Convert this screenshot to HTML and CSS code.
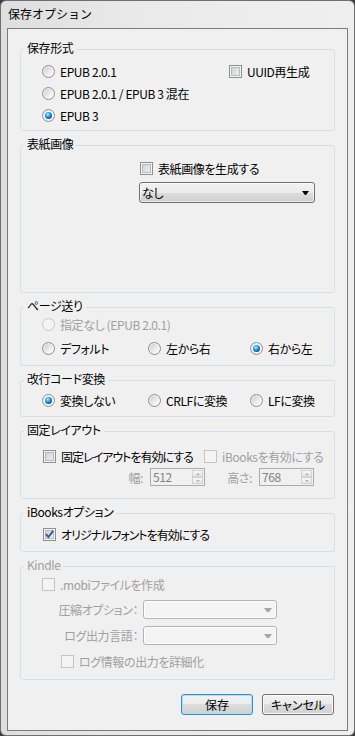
FILE: index.html
```html
<!DOCTYPE html>
<html lang="ja">
<head>
    <meta charset="UTF-8">
    <meta name="viewport" content="width=device-width, initial-scale=1.0">
    <title>保存オプション</title>
    <link rel="stylesheet" href="styles.css">
</head>
<body>

    <div class="window">
        <div class="titlebar">保存オプション</div>

        <div class="client">

            <!-- 保存形式 -->
            <div class="group">
                <div class="group-title">保存形式</div>
                <div class="format-body">
                    <div class="format-list">
                        <label class="opt"><span class="radio"></span>EPUB 2.0.1</label>
                        <label class="opt"><span class="radio"></span>EPUB 2.0.1 / EPUB 3 混在</label>
                        <label class="opt"><span class="radio on"></span>EPUB 3</label>
                    </div>
                    <label class="opt"><span class="check"></span>UUID再生成</label>
                </div>
            </div>

            <!-- 表紙画像 -->
            <div class="group">
                <div class="group-title">表紙画像</div>
                <div class="cover-body">
                    <label class="opt cover-check"><span class="check"></span>表紙画像を生成する</label>
                    <div class="combo">なし<span class="arrow"></span></div>
                </div>
            </div>

            <!-- ページ送り -->
            <div class="group">
                <div class="group-title">ページ送り</div>
                <div class="page-body">
                    <label class="opt dis"><span class="radio off"></span>指定なし (EPUB 2.0.1)</label>
                    <div class="radio-grid page-second">
                        <label class="opt"><span class="radio"></span>デフォルト</label>
                        <label class="opt"><span class="radio"></span>左から右</label>
                        <label class="opt"><span class="radio on"></span>右から左</label>
                    </div>
                </div>
            </div>

            <!-- 改行コード変換 -->
            <div class="group">
                <div class="group-title">改行コード変換</div>
                <div class="radio-grid newline-body">
                    <label class="opt"><span class="radio on"></span>変換しない</label>
                    <label class="opt"><span class="radio"></span>CRLFに変換</label>
                    <label class="opt"><span class="radio"></span>LFに変換</label>
                </div>
            </div>

            <!-- 固定レイアウト -->
            <div class="group">
                <div class="group-title">固定レイアウト</div>
                <div class="fixed-body">
                    <div class="fixed-row">
                        <label class="opt tight"><span class="check"></span>固定レイアウトを有効にする</label>
                        <label class="opt dis"><span class="check off"></span>iBooksを有効にする</label>
                    </div>
                    <div class="size-row">
                        <span class="size-label">幅:</span>
                        <div class="spin">
                            <span class="spin-val">512</span>
                            <span class="spin-btns"><span class="spin-btn up"></span><span class="spin-btn down"></span></span>
                        </div>
                        <span class="size-label">高さ:</span>
                        <div class="spin">
                            <span class="spin-val">768</span>
                            <span class="spin-btns"><span class="spin-btn up"></span><span class="spin-btn down"></span></span>
                        </div>
                    </div>
                </div>
            </div>

            <!-- iBooksオプション -->
            <div class="group">
                <div class="group-title">iBooksオプション</div>
                <div class="ibooks-body">
                    <label class="opt tight">
                        <span class="check">
                            <svg width="11" height="11" viewBox="0 0 11 11"><path d="M2 5.2 L4.4 8 L9.2 1.8" fill="none" stroke="#3d5a98" stroke-width="2"/></svg>
                        </span>オリジナルフォントを有効にする
                    </label>
                </div>
            </div>

            <!-- Kindle -->
            <div class="group">
                <div class="group-title dis">Kindle</div>
                <div class="kindle-body">
                    <label class="opt dis mobi-row"><span class="check off"></span>.mobiファイルを作成</label>
                    <div class="combo-row first">
                        <span class="combo-label">圧縮オプション：</span>
                        <div class="combo off"><span class="arrow"></span></div>
                    </div>
                    <div class="combo-row">
                        <span class="combo-label">ログ出力言語：</span>
                        <div class="combo off"><span class="arrow"></span></div>
                    </div>
                    <label class="opt dis log-row"><span class="check off"></span>ログ情報の出力を詳細化</label>
                </div>
            </div>

            <div class="buttons">
                <button class="btn default">保存</button>
                <button class="btn">キャンセル</button>
            </div>

        </div>
    </div>

</body>
</html>
```

FILE: styles.css
```css
html {
    background: #3c3c3c;
}

body {
    margin: 0;
    font-family: "Noto Sans CJK JP", "Noto Sans", sans-serif;
    font-size: 12px;
    color: #000;
}

.window {
    box-sizing: border-box;
    width: 355px;
    height: 736px;
    border: 1px solid #6f6f6f;
    border-radius: 6px;
    background: linear-gradient(to right, #dedede, #eaeaea 40%, #efefef);
    padding: 0 6px 4px;
    display: flex;
    flex-direction: column;
}

.titlebar {
    height: 27px;
    line-height: 26px;
    margin: 0 -6px;
    padding-left: 7px;
}

.client {
    flex: 1;
    border: 1px solid #7b7b7b;
    background: #f0f0f0;
    padding: 20px 12px 0;
    display: flex;
    flex-direction: column;
    font-feature-settings: "palt";
    letter-spacing: -0.4px;
}

/* group boxes */
.group {
    border: 1px solid #d5dfe5;
    border-radius: 3px;
    margin-bottom: 14px;
}

.group-title {
    width: fit-content;
    margin: -9px 0 0 3px;
    padding: 0 3px;
    line-height: 14px;
    background: #f0f0f0;
}

.dis {
    color: #a0a0a0;
}

.opt {
    display: flex;
    align-items: center;
    height: 22px;
    white-space: nowrap;
}

.tight {
    letter-spacing: -1px;
}

/* radio buttons and check boxes */
.radio {
    box-sizing: border-box;
    width: 13px;
    height: 13px;
    border-radius: 50%;
    border: 1px solid #8e8f8f;
    background: linear-gradient(135deg, #c8c8c8, #f8f8f8 75%);
    box-shadow: inset 0 0 0 1px #f2f2f2;
    display: inline-flex;
    align-items: center;
    justify-content: center;
    margin-right: 5px;
    flex: none;
}

.radio.on {
    background: #f4f4f4;
}

.radio.on::after {
    content: "";
    width: 7px;
    height: 7px;
    border-radius: 50%;
    background: radial-gradient(circle at 40% 35%, #b4f4ff 0, #2aa6e8 35%, #0e58a0 70%, #0b3a75 100%);
}

.radio.off {
    border-color: #c6c6c6;
    background: #f4f4f4;
    box-shadow: none;
}

.check {
    box-sizing: border-box;
    width: 13px;
    height: 13px;
    border: 1px solid #8e8f8f;
    background: linear-gradient(135deg, #c6cad0, #f6f6f6);
    box-shadow: inset 0 0 0 1px #f4f4f4, inset 0 0 0 2px #b7bbc0;
    display: inline-flex;
    margin-right: 5px;
    flex: none;
}

.check.off {
    border-color: #c5c5c5;
    background: #f4f4f4;
    box-shadow: none;
}

/* combo boxes */
.combo {
    box-sizing: border-box;
    width: 176px;
    height: 21px;
    border: 1px solid #707070;
    border-radius: 3px;
    background: linear-gradient(#f2f2f2, #ebebeb 50%, #dddddd 50%, #cfcfcf);
    box-shadow: inset 0 0 0 1px rgba(255, 255, 255, 0.6);
    display: flex;
    align-items: center;
    padding: 0 5px 0 2px;
}

.combo .arrow {
    margin-left: auto;
    width: 1px;
    height: 0;
    border-left: 3px solid transparent;
    border-right: 3px solid transparent;
    border-top: 4px solid #000;
}

.combo.off {
    width: 134px;
    height: 19px;
    border-color: #b0b4b7;
    background: #f4f4f4;
    box-shadow: inset 0 0 0 1px #fff;
    padding-right: 4px;
}

.combo.off .arrow {
    width: 2px;
    border-top-color: #a6a6a6;
}

/* 保存形式 */
.format-body {
    display: flex;
    padding: 5px 0 4px 21px;
}

.format-list {
    width: 187px;
}

/* 表紙画像 */
.cover-body {
    padding: 6px 0 89px 118px;
}

.cover-check {
    margin-left: 1px;
}

.cover-body .combo {
    margin-top: 3px;
}

/* ページ送り / 改行コード変換 */
.radio-grid {
    display: grid;
    grid-template-columns: 106px 102px auto;
}

.page-body {
    padding: 0 0 6px 21px;
}

.page-second {
    margin-top: 2px;
}

.newline-body {
    padding: 3px 0 5px 21px;
}

/* 固定レイアウト */
.fixed-body {
    padding: 8px 0 12px;
}

.fixed-row {
    display: grid;
    grid-template-columns: 161px auto;
    padding-left: 22px;
}

.size-row {
    display: grid;
    grid-template-columns: 129px 55px 54px 55px;
    align-items: center;
    margin-top: 1px;
    color: #a0a0a0;
}

.size-label {
    text-align: right;
    padding-right: 7px;
}

.spin {
    box-sizing: border-box;
    height: 18px;
    border: 1px solid #acacac;
    display: flex;
    color: #838383;
}

.spin-val {
    flex: 1;
    padding-left: 2px;
    line-height: 16px;
}

.spin-btns {
    width: 11px;
    padding: 1px 1px 1px 0;
    display: flex;
    flex-direction: column;
}

.spin-btn {
    flex: 1;
    border: 1px solid #d2d2d2;
    background: linear-gradient(#f8f8f8, #e6e6e6);
    display: flex;
    align-items: center;
    justify-content: center;
}

.spin-btn::after {
    content: "";
    width: 0;
    height: 0;
    border-left: 2px solid transparent;
    border-right: 2px solid transparent;
}

.spin-btn.up::after {
    border-bottom: 2px solid #b0b0b0;
}

.spin-btn.down::after {
    border-top: 2px solid #b0b0b0;
}

/* iBooksオプション */
.ibooks-body {
    padding: 4px 0 6px 22px;
}

/* Kindle */
.kindle-body {
    padding: 1px 0 7px;
}

.mobi-row {
    padding-left: 21px;
}

.combo-row {
    display: grid;
    grid-template-columns: 122px 134px;
    align-items: center;
    margin-top: 7px;
    color: #a0a0a0;
}

.combo-row.first {
    margin-top: 5px;
}

.combo-label {
    text-align: right;
    padding-right: 5px;
}

.log-row {
    margin-top: 5px;
    padding-left: 40px;
}

/* buttons */
.buttons {
    display: flex;
    justify-content: flex-end;
    gap: 9px;
    padding-right: 1px;
}

.btn {
    box-sizing: border-box;
    width: 72px;
    height: 21px;
    padding: 0;
    border: 1px solid #707070;
    border-radius: 3px;
    background: linear-gradient(#f2f2f2, #ebebeb 50%, #dddddd 50%, #cfcfcf);
    box-shadow: inset 0 0 0 1px #fcfcfc;
    font: inherit;
    color: #000;
}

.btn.default {
    border-color: #3c8bc9;
    box-shadow: inset 0 0 0 1px #a3e3fb;
}
```
